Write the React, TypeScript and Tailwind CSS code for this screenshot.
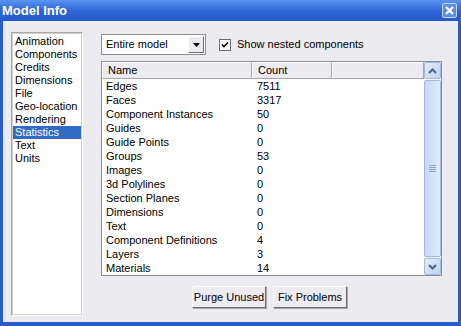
import { ReactNode } from "react";

// left-hand category list
const categories = [
  "Animation",
  "Components",
  "Credits",
  "Dimensions",
  "File",
  "Geo-location",
  "Rendering",
  "Statistics",
  "Text",
  "Units",
];

// statistics rows shown in the table
const stats: [string, string][] = [
  ["Edges", "7511"],
  ["Faces", "3317"],
  ["Component Instances", "50"],
  ["Guides", "0"],
  ["Guide Points", "0"],
  ["Groups", "53"],
  ["Images", "0"],
  ["3d Polylines", "0"],
  ["Section Planes", "0"],
  ["Dimensions", "0"],
  ["Text", "0"],
  ["Component Definitions", "4"],
  ["Layers", "3"],
  ["Materials", "14"],
];

const HeaderCell = ({ children, className }: { children?: ReactNode; className: string }) => (
  <div
    className={`flex h-full items-center border-t border-l border-t-white border-l-white border-r border-b border-r-[#a7a6aa] border-b-[#a7a6aa] bg-[#ecebef] pl-[5px] ${className}`}
  >
    {children}
  </div>
);

const ScrollButton = ({ up }: { up?: boolean }) => (
  <div className="flex h-[17px] w-[17px] shrink-0 items-center justify-center rounded-[2px] border border-[#a3b8de] bg-gradient-to-br from-[#e4ecfc] to-[#c0d2f4]">
    <svg width="9" height="6" viewBox="0 0 9 6">
      <path
        d={up ? "M1 5 L4.5 1.5 L8 5" : "M1 1 L4.5 4.5 L8 1"}
        fill="none"
        stroke="#4d6185"
        strokeWidth="2"
      />
    </svg>
  </div>
);

export default function App() {
  return (
    <div
      className="flex h-[326px] w-[461px] flex-col bg-[#2a5cc8] text-[11px] text-black"
      style={{ fontFamily: '"Liberation Sans", Arial, sans-serif' }}
    >
      {/* title bar */}
      <div className="flex h-[21px] shrink-0 items-center justify-between bg-gradient-to-b from-[#5a94f2] via-[#2f66d6] to-[#2459c9] pr-[4px] pl-[2px]">
        <span className="text-[13px] font-bold text-white">Model Info</span>
        <div className="flex h-[15px] w-[15px] items-center justify-center rounded-[2px] border border-[#c5d6f6] bg-[#5d8ee6]">
          <svg width="9" height="9" viewBox="0 0 9 9">
            <path d="M1 1 L8 8 M8 1 L1 8" stroke="white" strokeWidth="2.2" />
          </svg>
        </div>
      </div>

      {/* dialog body */}
      <div className="mx-[3px] mb-[4px] flex flex-1 gap-[18px] bg-[#ecebef] pt-[11px] pr-[15px] pb-[6px] pl-[8px]">
        {/* category list */}
        <div className="w-[72px] shrink-0 border border-t-[#a7a6aa] border-l-[#a7a6aa] border-r-white border-b-white bg-white">
          <div className="h-full border border-[#d4d0c8] pt-[1px]">
            {categories.map((c) => (
              <div
                key={c}
                className={`flex h-[13px] items-center pl-[2px] leading-[13px] ${
                  c === "Statistics" ? "bg-[#316ac5] text-white" : ""
                }`}
              >
                {c}
              </div>
            ))}
          </div>
        </div>

        {/* statistics panel */}
        <div className="flex flex-1 flex-col pt-[2px]">
          <div className="flex h-[21px] items-center">
            <div className="flex h-[21px] w-[105px] items-center border border-[#8e8d92] bg-white p-[1px]">
              <span className="flex-1 pl-[3px]">Entire model</span>
              <div className="flex h-[17px] w-[16px] items-center justify-center border border-t-white border-l-white border-r-[#6d6c70] border-b-[#6d6c70] bg-[#ecebef]">
                <svg width="7" height="4" viewBox="0 0 7 4">
                  <path d="M0 0 H7 L3.5 4 Z" fill="black" />
                </svg>
              </div>
            </div>
            <div className="ml-[13px] flex items-center gap-[6px]">
              <div className="flex h-[12px] w-[12px] items-center justify-center border border-[#6d6c70] bg-white">
                <svg width="8" height="8" viewBox="0 0 8 8">
                  <path d="M1 3.5 L3 5.5 L7 1.5" fill="none" stroke="black" strokeWidth="1.6" />
                </svg>
              </div>
              <span>Show nested components</span>
            </div>
          </div>

          {/* table */}
          <div className="mt-[6px] flex h-[215px] w-[341px] border border-[#8e8d92] bg-white">
            <div className="flex flex-1 flex-col overflow-hidden">
              <div className="flex h-[17px] shrink-0">
                <HeaderCell className="w-[150px]">Name</HeaderCell>
                <HeaderCell className="w-[80px]">Count</HeaderCell>
                <HeaderCell className="flex-1" />
              </div>
              {stats.map(([name, count]) => (
                <div key={name} className="flex h-[14px] shrink-0 items-center">
                  <span className="w-[150px] pl-[4px]">{name}</span>
                  <span className="pl-[5px]">{count}</span>
                </div>
              ))}
            </div>
            {/* scrollbar */}
            <div className="flex w-[17px] shrink-0 flex-col bg-[#f4f6fb]">
              <ScrollButton up />
              <div className="my-[1px] flex flex-1 items-center justify-center rounded-[2px] border border-[#a3b8de] bg-gradient-to-r from-[#c6d7f7] to-[#e2ebfc]">
                <div className="flex flex-col gap-[1px]">
                  <div className="h-[1px] w-[7px] bg-[#8aa2cf]" />
                  <div className="h-[1px] w-[7px] bg-[#8aa2cf]" />
                  <div className="h-[1px] w-[7px] bg-[#8aa2cf]" />
                  <div className="h-[1px] w-[7px] bg-[#8aa2cf]" />
                </div>
              </div>
              <ScrollButton />
            </div>
          </div>

          {/* action buttons */}
          <div className="mt-[10px] flex justify-center gap-[7px] pr-[5px]">
            {["Purge Unused", "Fix Problems"].map((b) => (
              <div
                key={b}
                className="flex h-[22px] w-[74px] items-center justify-center border border-t-white border-l-white border-r-[#6d6c70] border-b-[#6d6c70] bg-[#ecebef] shadow-[1px_1px_0_#a7a6aa]"
              >
                {b}
              </div>
            ))}
          </div>
        </div>
      </div>
    </div>
  );
}
